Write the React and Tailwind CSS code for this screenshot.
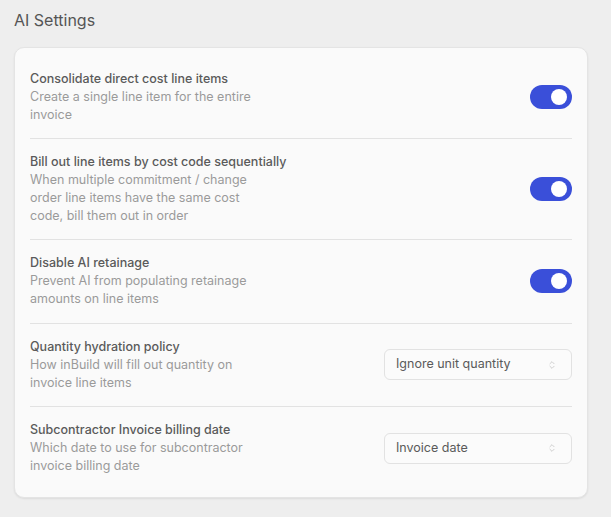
import { ChevronsUpDown } from "lucide-react";

const settings = [
  {
    title: "Consolidate direct cost line items",
    description: "Create a single line item for the entire invoice",
    type: "toggle",
  },
  {
    title: "Bill out line items by cost code sequentially",
    description: "When multiple commitment / change order line items have the same cost code, bill them out in order",
    type: "toggle",
  },
  {
    title: "Disable AI retainage",
    description: "Prevent AI from populating retainage amounts on line items",
    type: "toggle",
  },
  {
    title: "Quantity hydration policy",
    description: "How inBuild will fill out quantity on invoice line items",
    type: "select",
    value: "Ignore unit quantity",
  },
  {
    title: "Subcontractor Invoice billing date",
    description: "Which date to use for subcontractor invoice billing date",
    type: "select",
    value: "Invoice date",
  },
];

function Toggle() {
  return (
    <button className="flex h-[24px] w-[42px] shrink-0 items-center justify-end rounded-full bg-[#3a4fd9] pr-[5px]">
      <span className="h-[16px] w-[16px] rounded-full bg-white"></span>
    </button>
  );
}

function Select({ value }) {
  return (
    <button className="flex h-[31px] w-[188px] shrink-0 items-center justify-between rounded-[6px] border border-[#e2e2e2] bg-[#fbfbfb] pl-[11px] pr-[14px] text-[12.5px] text-[#5a5a5a]">
      <span>{value}</span>
      <ChevronsUpDown size={10} strokeWidth={1.5} className="text-[#b5b5b5]" />
    </button>
  );
}

export default function App() {
  return (
    <div className="min-h-[517px] bg-[#eeeeee] pl-[14px] pr-[23px] pt-[8px]" style={{ fontFamily: "Inter, 'Noto Sans', sans-serif" }}>
      <h1 className="text-[16px] leading-[24px] text-[#555]">AI Settings</h1>
      <div className="mt-[15px] rounded-[10px] border border-[#e4e4e4] bg-[#fafafa] px-[15px] py-[7.5px] shadow-[0_1px_2px_rgba(0,0,0,0.08)]">
        {settings.map((s, i) => (
          <div key={i} className={"flex items-center justify-between py-[14.2px] " + (i < settings.length - 1 ? "border-b border-[#e2e2e2]" : "")}>
            <div className="text-[12.5px] leading-[18px]">
              <div className="font-medium text-[#5a5a5a]">{s.title}</div>
              <div className="max-w-[232px] text-[#9a9a9a]">{s.description}</div>
            </div>
            {s.type === "toggle" ? <Toggle /> : <Select value={s.value} />}
          </div>
        ))}
      </div>
    </div>
  );
}
